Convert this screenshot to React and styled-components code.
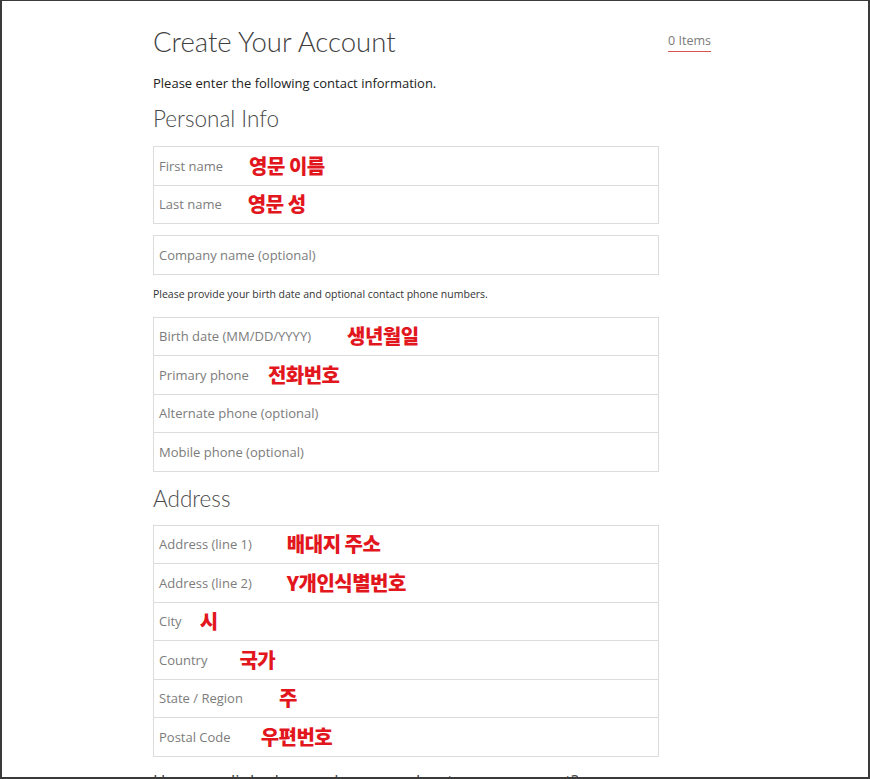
import React from 'react'
import styled, { createGlobalStyle } from 'styled-components'

const GlobalStyle = createGlobalStyle`
  html, body {
    margin: 0;
    padding: 0;
    background: #ffffff;
  }
  body {
    font-family: 'Open Sans', 'Noto Sans CJK KR', sans-serif;
  }
`

const Frame = styled.div`
  box-sizing: border-box;
  width: 870px;
  height: 779px;
  overflow: hidden;
  border-top: 1px solid #3a3a3a;
  border-left: 2px solid #3a3a3a;
  border-right: 2px solid #3a3a3a;
  border-bottom: 2px solid #3a3a3a;
  background: #fff;
  padding: 25px 0 0 151px;
`

const Column = styled.div`
  width: 558px;
`

const Header = styled.div`
  display: flex;
  justify-content: space-between;
  align-items: flex-start;
`

const Title = styled.h1`
  margin: 0;
  font-family: Lato, sans-serif;
  font-weight: 300;
  font-size: 27.5px;
  line-height: 32px;
  color: #3f3f3f;
`

const CartLink = styled.a`
  margin-top: 7px;
  font-family: 'Open Sans', sans-serif;
  font-size: 12.5px;
  line-height: 16px;
  color: #7a7a7a;
  padding-bottom: 2px;
  border-bottom: 1px solid #d9534f;
  text-decoration: none;
`

const Intro = styled.p`
  margin: 17px 0 0;
  font-size: 13px;
  line-height: 16px;
  color: #222;
`

const Heading = styled.h2`
  margin: ${(p) => p.$top}px 0 0;
  font-family: Lato, sans-serif;
  font-weight: 300;
  font-size: 22.5px;
  line-height: 26px;
  color: #4a4a4a;
`

const Form = styled.div`
  width: 506px;
`

const Group = styled.div`
  margin-top: ${(p) => p.$top}px;
  border: 1px solid #dcdcdc;
  display: flex;
  flex-direction: column;
`

const Row = styled.div`
  height: 37.5px;
  box-sizing: border-box;
  display: flex;
  align-items: center;
  padding-left: 5px;
  & + & {
    border-top: 1px solid #dcdcdc;
    height: 38.5px;
  }
`

const Label = styled.span`
  font-size: 13px;
  color: #7c7c7c;
  white-space: nowrap;
`

const Note = styled.span`
  margin-left: ${(p) => p.$gap}px;
  font-family: 'Noto Sans CJK KR', sans-serif;
  font-weight: 900;
  font-size: 20px;
  line-height: 22px;
  color: #e2161d;
  letter-spacing: -0.5px;
  white-space: nowrap;
`

const Hint = styled.p`
  margin: 12px 0 0;
  font-size: 10.5px;
  line-height: 14px;
  color: #333;
`

const Footer = styled.p`
  margin: 13px 0 0;
  font-size: 17px;
  line-height: 22px;
  color: #444;
`

const personal = [
  { label: 'First name', note: '영문 이름', gap: 26 },
  { label: 'Last name', note: '영문 성', gap: 26 },
]

const contact = [
  { label: 'Birth date (MM/DD/YYYY)', note: '생년월일', gap: 36 },
  { label: 'Primary phone', note: '전화번호', gap: 19 },
  { label: 'Alternate phone (optional)' },
  { label: 'Mobile phone (optional)' },
]

const address = [
  { label: 'Address (line 1)', note: '배대지 주소', gap: 35 },
  { label: 'Address (line 2)', note: 'Y개인식별번호', gap: 35 },
  { label: 'City', note: '시', gap: 18 },
  { label: 'Country', note: '국가', gap: 32 },
  { label: 'State / Region', note: '주', gap: 36 },
  { label: 'Postal Code', note: '우편번호', gap: 30 },
]

const FieldGroup = ({ fields, top }) => (
  <Group $top={top}>
    {fields.map((f) => (
      <Row key={f.label}>
        <Label>{f.label}</Label>
        {f.note && <Note $gap={f.gap}>{f.note}</Note>}
      </Row>
    ))}
  </Group>
)

export default function App() {
  return (
    <>
      <GlobalStyle />
      <Frame>
        <Column>
          <Header>
            <Title>Create Your Account</Title>
            <CartLink href="#">0 Items</CartLink>
          </Header>
          <Intro>Please enter the following contact information.</Intro>
          <Heading $top={15}>Personal Info</Heading>
          <Form>
            <FieldGroup fields={personal} top={14} />
            <FieldGroup fields={[{ label: 'Company name (optional)' }]} top={11} />
            <Hint>Please provide your birth date and optional contact phone numbers.</Hint>
            <FieldGroup fields={contact} top={16} />
          </Form>
          <Heading $top={14}>Address</Heading>
          <Form>
            <FieldGroup fields={address} top={13} />
          </Form>
          <Footer>Have you linked your phone number to your account?</Footer>
        </Column>
      </Frame>
    </>
  )
}
